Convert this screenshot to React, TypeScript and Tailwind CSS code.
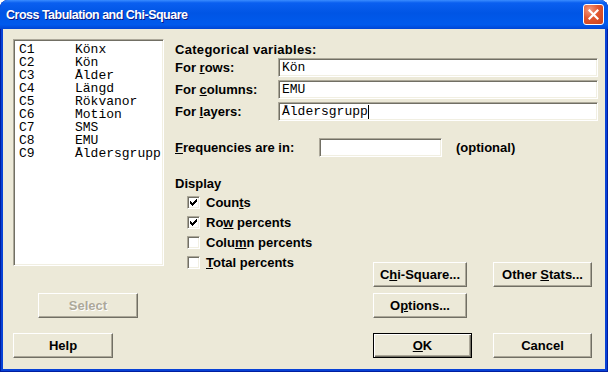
import type { ReactNode } from "react"

const sunken =
  "border border-t-[#ACA899] border-l-[#ACA899] border-b-white border-r-white shadow-[inset_1px_1px_0_#716F64,inset_-1px_-1px_0_#F1EFE2]"

const mono = "font-['Liberation_Mono','Courier_New',monospace] text-[13px]"

function Button({
  className = "",
  children,
  isDefault = false,
  disabled = false,
}: {
  className?: string
  children: ReactNode
  isDefault?: boolean
  disabled?: boolean
}) {
  const edge = isDefault
    ? "border border-black shadow-[inset_1px_1px_0_#fff,inset_-1px_-1px_0_#716F64,inset_-2px_-2px_0_#ACA899]"
    : "border border-t-white border-l-white border-r-[#716F64] border-b-[#716F64] shadow-[inset_-1px_-1px_0_#ACA899]"
  return (
    <div
      className={`${className} ${edge} h-[25px] shrink-0 flex items-center justify-center bg-[#ECE9D8] text-[13px] font-bold ${
        disabled ? "text-[#ACA899] [text-shadow:1px_1px_0_#fff]" : "text-black"
      }`}
    >
      <span className="whitespace-pre">{children}</span>
    </div>
  )
}

function CheckMark() {
  // classic 7x7 tick
  const px: [number, number][] = [
    [6, 0], [5, 1], [6, 1], [0, 2], [4, 2], [5, 2], [6, 2],
    [0, 3], [1, 3], [3, 3], [4, 3], [5, 3],
    [0, 4], [1, 4], [2, 4], [3, 4], [4, 4],
    [1, 5], [2, 5], [3, 5], [2, 6],
  ]
  return (
    <svg width="7" height="7" viewBox="0 0 7 7" shapeRendering="crispEdges">
      {px.map(([x, y]) => (
        <rect key={`${x}-${y}`} x={x} y={y} width="1" height="1" fill="#000" />
      ))}
    </svg>
  )
}

function Check({ checked, children }: { checked?: boolean; children: ReactNode }) {
  return (
    <div className="flex items-center h-[20px]">
      <div className={`w-[13px] h-[13px] bg-white ${sunken} flex items-center justify-center`}>
        {checked && <CheckMark />}
      </div>
      <span className="ml-[6px] text-[13px] font-bold leading-none">{children}</span>
    </div>
  )
}

function Field({ value, caret }: { value?: string; caret?: boolean }) {
  return (
    <div className={`h-[19px] bg-white ${sunken} flex items-center pl-[3px] ${mono} leading-none text-black`}>
      {value}
      {caret && <span className="w-px h-[14px] bg-black" />}
    </div>
  )
}

const columns = [
  ["C1", "Könx"],
  ["C2", "Kön"],
  ["C3", "Ålder"],
  ["C4", "Längd"],
  ["C5", "Rökvanor"],
  ["C6", "Motion"],
  ["C7", "SMS"],
  ["C8", "EMU"],
  ["C9", "Åldersgrupp"],
]

export default function App() {
  return (
    <div className="w-[608px] h-[372px] bg-white font-['Liberation_Sans',Arial,sans-serif]">
      <div className="w-full h-full flex flex-col rounded-t-[8px] overflow-hidden bg-[#0842D6] shadow-[inset_1px_0_0_#001EA0,inset_-1px_0_0_#001EA0,inset_0_-1px_0_#001EA0]">
        {/* Title bar */}
        <div className="h-[29px] shrink-0 flex items-center pl-[6px] pr-[4px] bg-[linear-gradient(to_bottom,#3A8CFF_0%,#0A5FF0_10%,#0055E5_45%,#005AED_85%,#0045D4_100%)]">
          <span className="flex-1 pt-[2px] text-white font-bold text-[12.5px] tracking-[-0.5px] [text-shadow:1px_1px_0_#0A1883]">
            Cross Tabulation and Chi-Square
          </span>
          <div className="w-[21px] h-[21px] rounded-[3px] border border-white bg-[radial-gradient(circle_at_30%_25%,#F49A7E_0%,#E0562F_45%,#C8411C_100%)] flex items-center justify-center">
            <svg width="11" height="11" viewBox="0 0 11 11">
              <path d="M1.5 1.5 L9.5 9.5 M9.5 1.5 L1.5 9.5" stroke="#fff" strokeWidth="2.2" strokeLinecap="square" />
            </svg>
          </div>
        </div>

        {/* Client area */}
        <div className="flex-1 mx-[3px] mb-[3px] bg-[#ECE9D8] flex flex-col pl-[10px] pt-[10px] text-black">
          <div className="flex items-start">
            {/* Column list */}
            <div className={`w-[151px] h-[227px] shrink-0 bg-white ${sunken} pt-[3px] pl-[5px] overflow-hidden ${mono} leading-[13px]`}>
              {columns.map(([c, name]) => (
                <div key={c} className="flex whitespace-nowrap">
                  <span className="w-[56px] shrink-0">{c}</span>
                  <span>{name}</span>
                </div>
              ))}
            </div>

            {/* Fields */}
            <div className="ml-[11px] w-[423px] flex flex-col">
              <div className="mt-[3px] h-[16px] leading-[16px] text-[13px] font-bold tracking-[0.3px]">Categorical variables:</div>
              <div className="flex flex-col gap-[3px]">
                <div className="flex items-center h-[19px]">
                  <span className="w-[103px] text-[13px] font-bold">For <u>r</u>ows:</span>
                  <div className="flex-1"><Field value="Kön" /></div>
                </div>
                <div className="flex items-center h-[19px]">
                  <span className="w-[103px] text-[13px] font-bold">For <u>c</u>olumns:</span>
                  <div className="flex-1"><Field value="EMU" /></div>
                </div>
                <div className="flex items-center h-[19px]">
                  <span className="w-[103px] text-[13px] font-bold">For <u>l</u>ayers:</span>
                  <div className="flex-1"><Field value="Åldersgrupp" caret /></div>
                </div>
              </div>

              <div className="mt-[17px] flex items-center h-[19px]">
                <span className="w-[144px] text-[13px] font-bold"><u>F</u>requencies are in:</span>
                <div className="w-[123px]"><Field /></div>
                <span className="ml-[14px] text-[13px] font-bold">(optional)</span>
              </div>

              <div className="mt-[19px] h-[16px] leading-[16px] text-[13px] font-bold">Display</div>

              <div className="flex items-start">
                <div className="ml-[12px] w-[186px] flex flex-col">
                  <Check checked>Coun<u>t</u>s</Check>
                  <Check checked>Ro<u>w</u> percents</Check>
                  <Check>Colu<u>m</u>n percents</Check>
                  <Check><u>T</u>otal percents</Check>
                </div>
                <Button className="mt-[70px] w-[94px]">C<u>h</u>i-Square...</Button>
                <Button className="mt-[70px] ml-[26px] w-[99px]">Other <u>S</u>tats...</Button>
              </div>
            </div>
          </div>

          <div className="mt-[6px] flex">
            <Button className="ml-[25px] w-[100px]" disabled>Select</Button>
            <Button className="ml-[235px] w-[94px]">O<u>p</u>tions...</Button>
          </div>

          <div className="mt-[15px] flex">
            <Button className="w-[100px]">Help</Button>
            <Button className="ml-[260px] w-[99px]" isDefault><u>O</u>K</Button>
            <Button className="ml-[21px] w-[99px]">Cancel</Button>
          </div>
        </div>
      </div>
    </div>
  )
}
